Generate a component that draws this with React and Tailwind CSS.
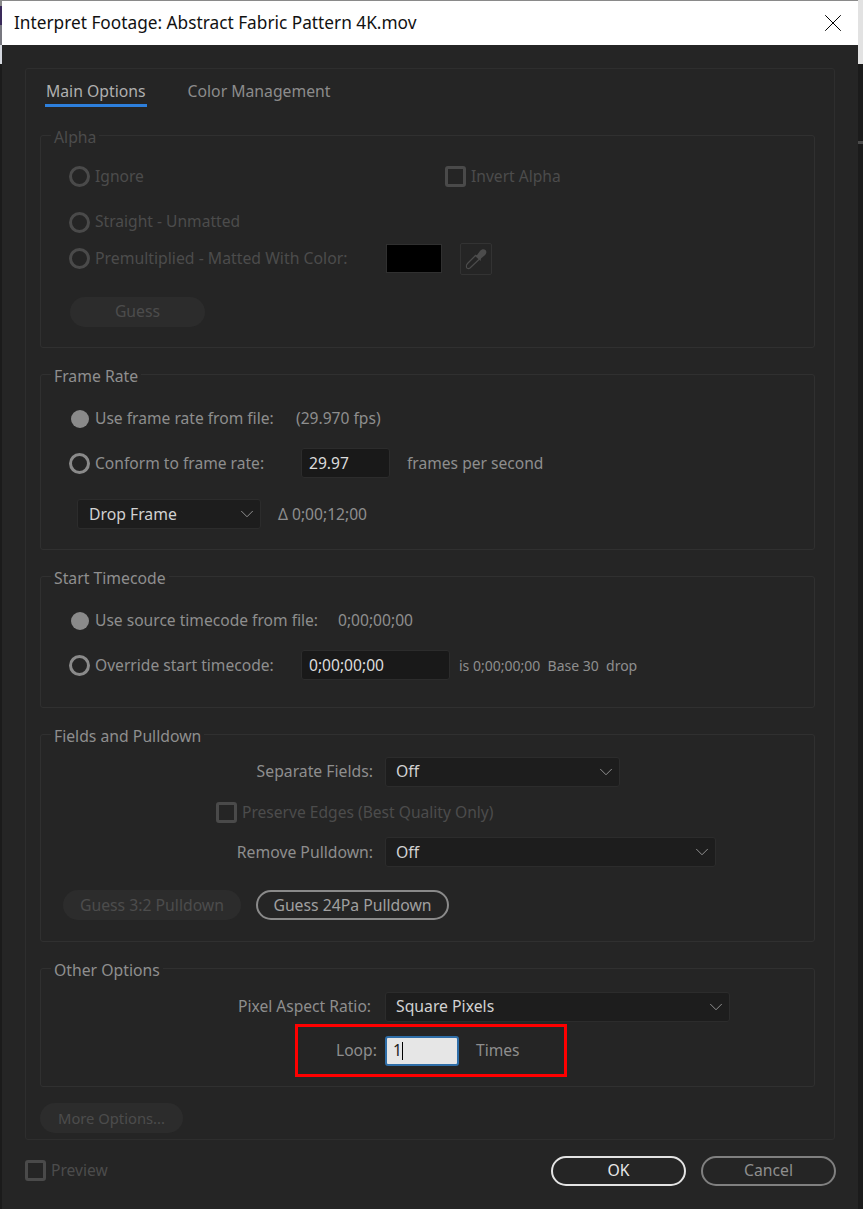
import { ChevronDown, X } from "lucide-react";

const font = "font-['Noto_Sans',sans-serif]";

function Group({ title, height, titleClass = "text-[#8f8f8f]", children }) {
  return (
    <div className={`relative rounded-[3px] border border-[#303030] ${height}`}>
      <span className={`absolute left-[10px] top-[-11px] bg-[#252525] px-[3px] text-[15.75px] leading-[24px] ${titleClass}`}>
        {title}
      </span>
      {children}
    </div>
  );
}

function Radio({ checked, disabled, children, className = "" }) {
  const color = disabled ? "text-[#4c4c4c]" : "text-[#8e8e8e]";
  return (
    <div className={`flex items-center text-[15.6px] ${color} ${className}`}>
      <span className="mr-[5px] flex h-[21px] w-[21px] shrink-0 items-center justify-center">
        {checked ? (
          <span className="h-[18px] w-[18px] rounded-full bg-[#8a8a8a]" />
        ) : (
          <span className={`h-[21px] w-[21px] rounded-full border-[3px] ${disabled ? "border-[#4a4a4a]" : "border-[#8a8a8a]"}`} />
        )}
      </span>
      {children}
    </div>
  );
}

function Check({ children, className = "" }) {
  return (
    <div className={`flex items-center text-[15.6px] text-[#4c4c4c] ${className}`}>
      <span className="mr-[5px] h-[21px] w-[21px] rounded-[3px] border-[3px] border-[#4a4a4a]" />
      {children}
    </div>
  );
}

function Pill({ children, className = "" }) {
  return (
    <div className={`flex h-[30px] items-center justify-center rounded-full text-[15.75px] ${className}`}>
      {children}
    </div>
  );
}

function Select({ value, className = "" }) {
  return (
    <div className={`flex h-[30px] items-center justify-between rounded-[3px] border border-[#2c2c2c] bg-[#1d1d1d] pl-[10px] pr-[2px] text-[15.75px] text-[#d2d2d2] ${className}`}>
      <span>{value}</span>
      <ChevronDown size={22} strokeWidth={0.9} className="text-[#a8a8a8]" />
    </div>
  );
}

function Field({ value, className = "" }) {
  return (
    <div className={`flex h-[30px] items-center rounded-[3px] border border-[#2c2c2c] bg-[#191919] pl-[7px] text-[15.6px] text-[#dcdcdc] ${className}`}>
      {value}
    </div>
  );
}

function Eyedropper() {
  return (
    <svg width="24" height="24" viewBox="0 0 24 24" fill="none">
      <path d="M12 8 3.500 16.500C2.500 17.500 2 19 2.500 20.500 3 21.500 4.500 22 6 21L15.500 12" stroke="#4c4c4c" strokeWidth="1.200" />
      <path d="M10.500 8.500 13 8 16 4C17.500 2 20 1.500 21.500 3 23 4.500 22.500 7 20.500 8.500L17 11.500 16.500 14z" fill="#4c4c4c" />
    </svg>
  );
}

export default function App() {
  return (
    <div className={`flex h-[1209px] w-[863px] overflow-hidden bg-[#1b1b1b] ${font}`}>
      <div className="flex w-[2px] shrink-0 flex-col">
        <div className="h-[6px] bg-[#8a8a8a]" />
        <div className="h-[19px] bg-[#3a2a5a]" />
        <div className="h-[20px] bg-[#77777f]" />
        <div className="h-[19px] bg-[#d5d8df]" />
      </div>

      <div className="flex w-[856px] shrink-0 flex-col border-t border-[#8a8a8a] bg-[#252525]">
        <div className="flex h-[44px] shrink-0 items-center justify-between bg-white pl-[12px] pr-[10px] text-[17.25px] text-[#111111]">
          <span>Interpret Footage: Abstract Fabric Pattern 4K.mov</span>
          <X size={30} strokeWidth={0.8} className="text-black" />
        </div>

        <div className="mx-[23px] mt-[23px] h-[1072px] rounded-[3px] border border-[#2e2e2e] pl-[14px] pr-[19px]">
          <div className="flex h-[66px] items-start pl-[5px] pt-[11px] text-[15.75px]">
            <span className="border-b-[3px] border-[#2d7fdc] px-[1px] text-[#b0b0b0]">Main Options</span>
            <span className="ml-[41px] text-[#8c8c8c]">Color Management</span>
          </div>

          <div className="flex flex-col gap-[26px]">
            <Group title="Alpha" height="h-[213px]" titleClass="text-[#4c4c4c]">
              <div className="flex pl-[28px] pt-[29px]">
                <Radio disabled className="w-[376px]">Ignore</Radio>
                <Check>Invert Alpha</Check>
              </div>
              <Radio disabled className="ml-[28px] mt-[22px]">Straight - Unmatted</Radio>
              <div className="ml-[28px] mt-[9px] flex items-center">
                <Radio disabled className="w-[317px] !text-[15.8px]">Premultiplied - Matted With Color:</Radio>
                <span className="h-[29px] w-[56px] border border-[#303030] bg-black" />
                <span className="ml-[18px] flex h-[32px] w-[32px] items-center justify-center rounded-[2px] border border-[#333333]">
                  <Eyedropper />
                </span>
              </div>
              <Pill className="ml-[29px] mt-[22px] w-[135px] bg-[#2c2c2c] text-[#4c4c4c]">Guess</Pill>
            </Group>

            <Group title="Frame Rate" height="h-[176px]">
              <div className="ml-[28px] mt-[32px] flex items-center">
                <Radio checked className="w-[227px]">Use frame rate from file:</Radio>
                <span className="text-[15.6px] text-[#8e8e8e]">(29.970 fps)</span>
              </div>
              <div className="ml-[28px] mt-[18px] flex items-center">
                <Radio className="w-[232px]">Conform to frame rate:</Radio>
                <Field value="29.97" className="w-[89px]" />
                <span className="ml-[17px] text-[15.6px] text-[#8e8e8e]">frames per second</span>
              </div>
              <div className="ml-[36px] mt-[21px] flex items-center">
                <Select value="Drop Frame" className="w-[184px] !pl-[11px]" />
                <span className="ml-[17px] text-[15.6px] text-[#8e8e8e]">Δ 0;00;12;00</span>
              </div>
            </Group>

            <Group title="Start Timecode" height="h-[132px]">
              <div className="ml-[28px] mt-[32px] flex items-center">
                <Radio checked className="w-[269px]">Use source timecode from file:</Radio>
                <span className="text-[15.6px] text-[#8e8e8e]">0;00;00;00</span>
              </div>
              <div className="ml-[28px] mt-[18px] flex items-center">
                <Radio className="w-[232px]">Override start timecode:</Radio>
                <Field value="0;00;00;00" className="w-[149px]" />
                <span className="ml-[9px] text-[14px] text-[#8e8e8e]">is 0;00;00;00&nbsp;&nbsp;Base 30&nbsp;&nbsp;drop</span>
              </div>
            </Group>

            <Group title="Fields and Pulldown" height="h-[208px]">
              <div className="mt-[22px] flex items-center">
                <span className="w-[332px] text-right text-[15.75px] text-[#8e8e8e]">Separate Fields:</span>
                <Select value="Off" className="ml-[12px] w-[235px]" />
              </div>
              <Check className="ml-[175px] mt-[14px]">Preserve Edges (Best Quality Only)</Check>
              <div className="mt-[13px] flex items-center">
                <span className="w-[332px] text-right text-[15.75px] text-[#8e8e8e]">Remove Pulldown:</span>
                <Select value="Off" className="ml-[12px] w-[331px]" />
              </div>
              <div className="ml-[22px] mt-[23px] flex gap-[15px]">
                <Pill className="w-[178px] bg-[#2c2c2c] text-[#4c4c4c]">Guess 3:2 Pulldown</Pill>
                <Pill className="w-[193px] border-2 border-[#8a8a8a] text-[#a0a0a0]">Guess 24Pa Pulldown</Pill>
              </div>
            </Group>

            <Group title="Other Options" height="h-[119px]">
              <div className="mt-[23px] flex items-center">
                <span className="w-[330px] text-right text-[15.6px] text-[#8e8e8e]">Pixel Aspect Ratio:</span>
                <Select value="Square Pixels" className="ml-[14px] w-[345px]" />
              </div>
              <div className="ml-[254px] mt-[2px] flex h-[53px] w-[272px] items-center border-[3px] border-[#ff0000] pl-[38px] text-[15.6px] text-[#8e8e8e]">
                <span className="w-[40px]">Loop:</span>
                <span className="ml-[9px] flex h-[30px] w-[74px] items-center rounded-[3px] border-2 border-[#2f6ea8] bg-[#e6e6e6] pl-[6px] text-[#222222]">
                  1<span className="h-[18px] w-px bg-black" />
                </span>
                <span className="ml-[17px]">Times</span>
              </div>
            </Group>
          </div>

          <Pill className="mt-[16px] w-[143px] bg-[#2c2c2c] !text-[14.75px] text-[#4c4c4c]">More Options...</Pill>
        </div>

        <div className="ml-[23px] mr-[22px] mt-[16px] flex items-center justify-between">
          <Check>Preview</Check>
          <div className="flex gap-[15px]">
            <Pill className="w-[135px] border-2 border-[#e4e4e4] text-[#e8e8e8]">OK</Pill>
            <Pill className="w-[135px] border-2 border-[#808080] text-[#8e8e8e]">Cancel</Pill>
          </div>
        </div>
      </div>

      <div className="flex flex-1 flex-col">
        <div className="h-[64px] bg-[#e2e2e2]" />
        <div className="mt-[77px] h-[3px] bg-[#4a4a4a]" />
      </div>
    </div>
  );
}
